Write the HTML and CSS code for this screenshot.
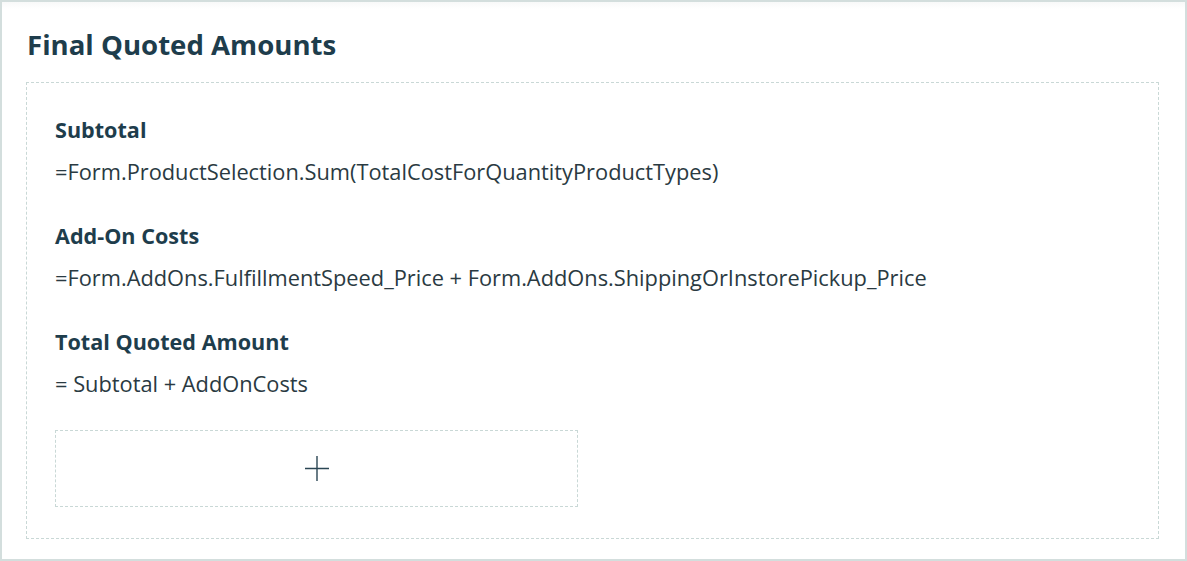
FILE: index.html
```html
<!DOCTYPE html>
<html>
<head>
<meta charset="utf-8">
<link rel="stylesheet" href="styles.css">
</head>
<body>
<div class="panel">
  <h1 class="title">Final Quoted Amounts</h1>
  <div class="zone">
    <div class="field">
      <div class="label">Subtotal</div>
      <div class="value">=Form.ProductSelection.Sum(TotalCostForQuantityProductTypes)</div>
    </div>
    <div class="field">
      <div class="label">Add-On Costs</div>
      <div class="value">=Form.AddOns.FulfillmentSpeed_Price + Form.AddOns.ShippingOrInstorePickup_Price</div>
    </div>
    <div class="field">
      <div class="label">Total Quoted Amount</div>
      <div class="value">= Subtotal + AddOnCosts</div>
    </div>
    <div class="add">
      <svg width="24" height="25" viewBox="0 0 24 25"><path d="M12 0V25M0 12.5H24" stroke="#2b4654" stroke-width="1.4" fill="none"/></svg>
    </div>
  </div>
</div>
</body>
</html>
```
FILE: styles.css
```css
html, body { margin: 0; padding: 0; background: #fff; }
body { font-family: "Open Sans", "Noto Sans", sans-serif; color: #2b2b2b; }
.panel {
  box-sizing: border-box;
  width: 1187px;
  height: 561px;
  border: 2px solid #d3dedd;
  padding: 0 26px 0 24px;
  background: linear-gradient(#f8f9f9, #fff 7px);
}
.title {
  margin: 0;
  padding: 22px 0 0 1px;
  height: 80px;
  box-sizing: border-box;
  font-size: 27.6px;
  line-height: 40px;
  font-weight: 700;
  color: #1e3d4c;
}
.zone {
  border: 1px dashed #c9d8d6;
  height: 457px;
  box-sizing: border-box;
  padding: 32px 28px 0 28px;
}
.field + .field { margin-top: 34px; }
.label {
  font-size: 21.6px;
  font-weight: 700;
  color: #1e3d4c;
  line-height: 30px;
  margin-bottom: 12px;
}
.value {
  font-size: 21.8px;
  line-height: 30px;
  color: #2a3a42;
}
.add {
  margin-top: 31px;
  width: 523px;
  height: 77px;
  box-sizing: border-box;
  border: 1px dashed #c9d8d6;
  display: flex;
  align-items: center;
  justify-content: center;
}
```
